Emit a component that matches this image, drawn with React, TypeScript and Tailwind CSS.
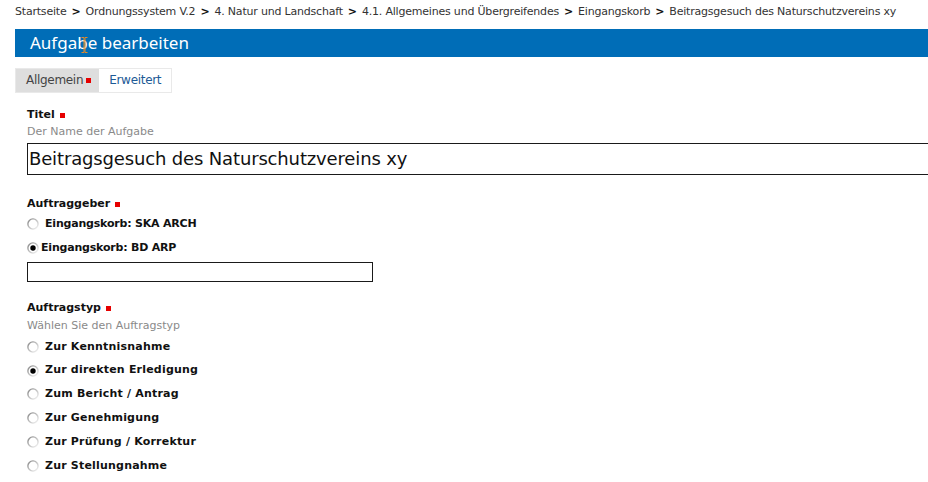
import React from 'react';

const Req = () => <span className="ml-[5px] inline-block h-[5px] w-[5px] bg-[#e60000] align-middle" />;

const Radio = ({ checked }: { checked?: boolean }) => (
  <svg width="12" height="12" viewBox="0 0 12 12" className="shrink-0">
    <defs>
      <linearGradient id="rg" x1="0" y1="0" x2="1" y2="1">
        <stop offset="0" stopColor="#7a7a7a" />
        <stop offset="0.5" stopColor="#c0c0c0" />
        <stop offset="1" stopColor="#ffffff" />
      </linearGradient>
    </defs>
    <circle cx="6" cy="6" r="5.8" fill="url(#rg)" />
    <circle cx="6" cy="6" r="4.4" fill="#fff" />
    {checked && <circle cx="6" cy="6" r="2.7" fill="#000" />}
  </svg>
);

const Sep = () => <span className="mx-[5px] font-bold text-[#111]">&gt;</span>;

const crumbs = [
  'Startseite',
  'Ordnungssystem V.2',
  '4. Natur und Landschaft',
  '4.1. Allgemeines und Übergreifendes',
  'Eingangskorb',
  'Beitragsgesuch des Naturschutzvereins xy',
];

const types = [
  'Zur Kenntnisnahme',
  'Zur direkten Erledigung',
  'Zum Bericht / Antrag',
  'Zur Genehmigung',
  'Zur Prüfung / Korrektur',
  'Zur Stellungnahme',
];

export default function App() {
  return (
    <div className="min-h-screen overflow-hidden bg-white font-['DejaVu_Sans',Verdana,sans-serif] text-[11px] text-[#111]">
      <div className="h-[29px] whitespace-nowrap pl-[15px] pt-[5px] leading-[14px] tracking-[-0.2px] text-[#333]">
        {crumbs.map((c, i) => (
          <span key={c}>
            {i > 0 && <Sep />}
            {c}
          </span>
        ))}
      </div>

      <div className="relative ml-[15px] h-[28px] bg-[#006db7] pl-[15px] font-['Noto_Sans',sans-serif] text-[17px] leading-[28px] text-white">
        Aufgabe bearbeiten
        <svg className="absolute left-[66px] top-[8px]" width="7" height="16" viewBox="0 0 7 16">
          <path d="M0.5 0.5h2.5v15H0.5M6.5 0.5H4v15h2.5" fill="none" stroke="#e08a2a" strokeWidth="1" />
        </svg>
      </div>

      <div className="ml-[15px] mt-[11px] flex h-[25px] w-fit border border-[#e9e9e9] text-[12px] leading-[23px] tracking-[-0.3px]">
        <div className="flex items-center bg-[#dedede] pl-[10px] pr-[8px] text-[#444]">
          Allgemein
          <span className="ml-[3px] inline-block h-[5px] w-[5px] bg-[#e60000]" />
        </div>
        <div className="px-[10px] text-[#1d5a96]">Erweitert</div>
      </div>

      <div className="pl-[27px]">
        <div className="mt-[15px] h-[14px] font-bold leading-[14px]">
          Titel
          <Req />
        </div>
        <div className="mt-[3px] h-[14px] leading-[14px] text-[#8a8a8a]">Der Name der Aufgabe</div>
        <div className="mt-[4px] -mr-[20px] h-[32px] border border-[#1a1a1a] pl-[1px] text-[18px] leading-[30px] tracking-[-0.15px] text-[#111]">
          Beitragsgesuch des Naturschutzvereins xy
        </div>

        <div className="mt-[22px] h-[14px] font-bold leading-[14px]">
          Auftraggeber
          <Req />
        </div>
        <div className="mt-[3px] flex h-[20px] items-center font-bold tracking-[-0.2px]">
          <Radio />
          <span className="ml-[6px]">Eingangskorb: SKA ARCH</span>
        </div>
        <div className="mt-[4px] flex h-[20px] items-center font-bold tracking-[-0.2px]">
          <Radio checked />
          <span className="ml-[2px]">Eingangskorb: BD ARP</span>
        </div>
        <div className="mt-[4px] h-[20px] w-[346px] border border-[#1a1a1a]" />

        <div className="mt-[19px] h-[14px] font-bold leading-[14px]">
          Auftragstyp
          <Req />
        </div>
        <div className="mt-[4px] h-[14px] leading-[14px] text-[#8a8a8a]">Wählen Sie den Auftragstyp</div>
        <div className="mt-[2px] flex flex-col">
          {types.map((t, i) => (
            <div key={t} className="flex h-[23.8px] items-center font-bold">
              <Radio checked={i === 1} />
              <span className="ml-[6px] tracking-[0.2px]">{t}</span>
            </div>
          ))}
        </div>
      </div>
    </div>
  );
}
